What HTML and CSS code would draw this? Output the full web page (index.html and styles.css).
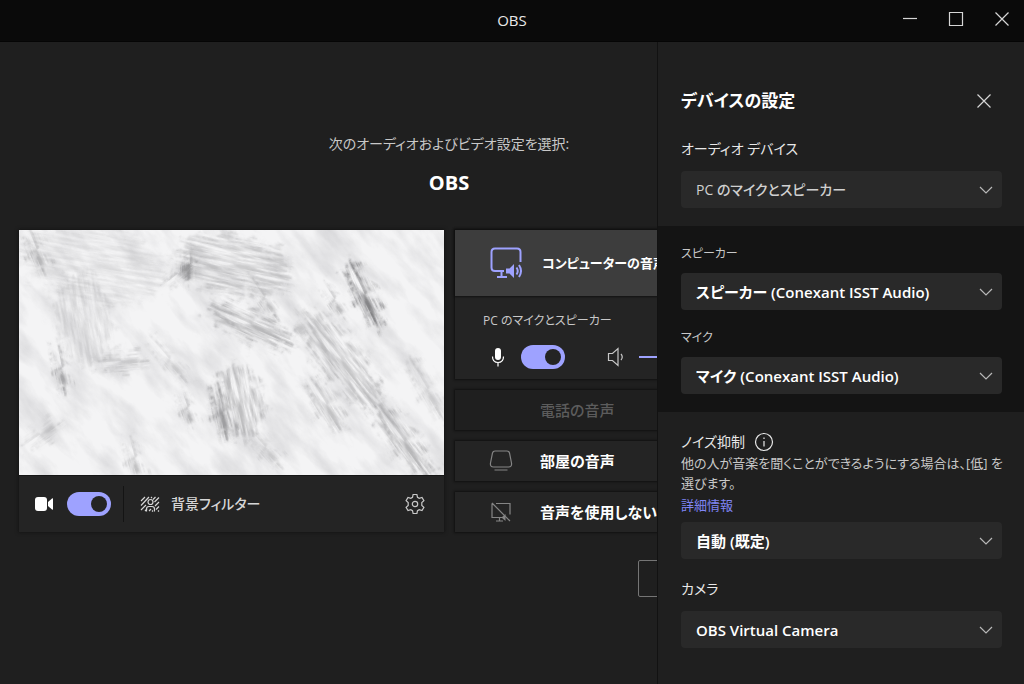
FILE: index.html
```html
<!DOCTYPE html>
<html lang="ja">
<head>
<meta charset="utf-8">
<meta name="viewport" content="width=device-width, initial-scale=1">
<title>OBS</title>
<link rel="stylesheet" href="styles.css">
</head>
<body>
<header class="titlebar">
  <span class="titlebar-name">OBS</span>
  <div class="window-buttons">
    <button class="icon-button" aria-label="最小化"><svg width="16" height="16" viewBox="0 0 16 16"><path d="M1 7.5h14"/></svg></button>
    <button class="icon-button" aria-label="最大化"><svg width="16" height="16" viewBox="0 0 16 16"><path d="M1.500 1.500h13v13h-13z"/></svg></button>
    <button class="icon-button" aria-label="閉じる"><svg width="16" height="16" viewBox="0 0 16 16"><path d="M1.500 1.500l13 13M14.500 1.500l-13 13"/></svg></button>
  </div>
</header>
<div class="workspace">
  <main class="stage">
    <div class="setup">
      <p class="prompt">次のオーディオおよびビデオ設定を選択:</p>
      <h1 class="meeting">OBS</h1>
      <div class="columns">
        <section class="video-card">
          <svg class="preview" viewBox="0 0 425 245" preserveAspectRatio="none" role="img" aria-label="カメラのプレビュー">
            <defs>
              <filter id="grain" x="0" y="0" width="1" height="1" color-interpolation-filters="sRGB">
                <feTurbulence type="fractalNoise" baseFrequency="0.018 0.05" numOctaves="6" seed="8"/>
                <feColorMatrix values="0 0 0 0 .6  0 0 0 0 .6  0 0 0 0 .62  1.600 0 0 0 -.65"/>
              </filter>
              <filter id="streak" x="-.3" y="-.4" width="1.600" height="1.800" color-interpolation-filters="sRGB">
                <feTurbulence type="fractalNoise" baseFrequency="0.035 0.28" numOctaves="5" seed="5" result="n"/>
                <feTurbulence type="fractalNoise" baseFrequency="0.09" numOctaves="4" seed="3" result="m"/>
                <feColorMatrix in="n" values="0 0 0 0 .5  0 0 0 0 .5  0 0 0 0 .51  2.200 0 0 0 -.6" result="lines"/>
                <feGaussianBlur in="SourceGraphic" stdDeviation="3" result="soft"/>
                <feDisplacementMap in="soft" in2="m" scale="28" xChannelSelector="G" yChannelSelector="B" result="rough"/>
                <feComposite in="lines" in2="rough" operator="in"/>
              </filter>
            </defs>
            <rect width="425" height="245" fill="#f4f4f5"/>
            <g transform="rotate(50 212 122)" opacity=".38"><rect x="-60" y="-130" width="550" height="500" filter="url(#grain)"/></g>
            <g>
              <ellipse rx="75" ry="38" transform="translate(75 35) rotate(10)" opacity=".14" filter="url(#streak)"/>
              <ellipse rx="60" ry="30" transform="translate(215 35) rotate(12)" opacity=".34" filter="url(#streak)"/>
              <ellipse rx="18" ry="6" transform="translate(160 44) rotate(-38)" opacity=".6" filter="url(#streak)"/>
              <ellipse rx="16" ry="5" transform="translate(170 35) rotate(88)" opacity=".8" filter="url(#streak)"/>
              <ellipse rx="48" ry="15" transform="translate(232 95) rotate(24)" opacity=".5" filter="url(#streak)"/>
              <ellipse rx="26" ry="5" transform="translate(245 68) rotate(55)" opacity=".5" filter="url(#streak)"/>
              <ellipse rx="38" ry="10" transform="translate(345 65) rotate(65)" opacity=".95" filter="url(#streak)"/>
              <ellipse rx="18" ry="5" transform="translate(315 70) rotate(57)" opacity=".6" filter="url(#streak)"/>
              <ellipse rx="62" ry="20" transform="translate(322 130) rotate(52)" opacity=".4" filter="url(#streak)"/>
              <ellipse rx="30" ry="12" transform="translate(307 175) rotate(58)" opacity=".4" filter="url(#streak)"/>
              <ellipse rx="38" ry="24" transform="translate(220 172) rotate(78)" opacity=".45" filter="url(#streak)"/>
              <ellipse rx="28" ry="9" transform="translate(203 182) rotate(78)" opacity=".7" filter="url(#streak)"/>
              <ellipse rx="16" ry="6" transform="translate(168 178) rotate(70)" opacity=".55" filter="url(#streak)"/>
              <ellipse rx="25" ry="6" transform="translate(42 138) rotate(79)" opacity=".7" filter="url(#streak)"/>
              <ellipse rx="24" ry="11" transform="translate(102 132) rotate(-4)" opacity=".35" filter="url(#streak)"/>
              <ellipse rx="22" ry="8" transform="translate(17 20) rotate(68)" opacity=".5" filter="url(#streak)"/>
              <ellipse rx="48" ry="28" transform="translate(65 90) rotate(80)" opacity=".18" filter="url(#streak)"/>
              <ellipse rx="50" ry="13" transform="translate(385 212) rotate(54)" opacity=".5" filter="url(#streak)"/>
              <ellipse rx="20" ry="7" transform="translate(115 228) rotate(75)" opacity=".45" filter="url(#streak)"/>
              <ellipse rx="24" ry="7" transform="translate(246 218) rotate(48)" opacity=".35" filter="url(#streak)"/>
              <ellipse rx="30" ry="6" transform="translate(150 130) rotate(50)" opacity=".3" filter="url(#streak)"/>
              <ellipse rx="40" ry="8" transform="translate(408 160) rotate(60)" opacity=".3" filter="url(#streak)"/>
              <ellipse rx="20" ry="8" transform="translate(22 205) rotate(-35)" opacity=".3" filter="url(#streak)"/>
            </g>
          </svg>
          <div class="video-bar">
            <svg class="camera" width="20" height="16" viewBox="0 0 20 16"><rect x="1" y="1" width="12" height="14" rx="3"/><path d="M14 6l4-3.500c.6-.5 1-.3 1 .4v10.200c0 .7-.4.900-1 .4L14 10z"/></svg>
            <input class="switch" type="checkbox" role="switch" aria-label="カメラ" checked>
            <span class="divider"></span>
            <button class="filter-button">
              <svg width="20" height="16" viewBox="0 0 20 16"><path d="M1 5l4-4M1 9.500L9 1M1 14l5-5M5 15l2-2M15.500 1L13 3.500M19 1.500L14.500 6M19 6l-4 4M19 10.500L16 13.500M19 14.500l-1 1M12 1l-1 1"/><circle cx="10.500" cy="6" r="2.500"/><path d="M6.500 15.500v-2.500q0-2.500 2.500-2.500h3q2.500 0 2.500 2.500v2.500M9 15l2-2M12 15.500l1-1"/></svg>
              背景フィルター
            </button>
            <button class="icon-button settings" aria-label="設定"><svg width="22" height="22" viewBox="0 0 22 22"><path d="M9.100 1.500h3.800l.6 2.800 1.700 1 2.800-.9 1.900 3.300-2.100 1.900v2.800l2.100 1.900-1.900 3.300-2.800-.9-1.700 1-.6 2.800H9.100l-.6-2.800-1.700-1-2.800.9-1.900-3.300 2.100-1.900V9.600L2.100 7.700 4 4.400l2.800.9 1.700-1z"/><circle cx="11" cy="11" r="2.700"/></svg></button>
          </div>
        </section>
        <section class="audio-list">
          <div class="computer-audio">
            <button class="option selected">
              <svg class="computer" width="34" height="34" viewBox="0 0 34 34"><path d="M15 25H6q-3.500 0-3.500-3.500V6Q2.500 2.500 6 2.500h22q3.500 0 3.500 3.500v10M8 31h10M12.500 25v6"/><path class="solid" d="M17 22.500h3.500L25 18v14l-4.500-4.500H17z"/><path d="M27.500 21.500q2.500 3.500 0 7M30 19q4 6 0 12"/></svg>
              コンピューターの音声
            </button>
            <div class="device-controls">
              <p class="device-name">PC のマイクとスピーカー</p>
              <div class="device-row">
                <svg class="mic" width="16" height="20" viewBox="0 0 16 20"><rect class="solid" x="5" y="1" width="6" height="12" rx="3"/><path d="M2.500 9.500q0 6 5.500 6t5.500-6M8 15.500v4"/></svg>
                <input class="switch" type="checkbox" role="switch" aria-label="マイク" checked>
                <svg class="speaker" width="18" height="20" viewBox="0 0 18 20"><path d="M1.500 6.500h4l5.500-5v17l-5.500-5h-4zM14 7q2.500 3 0 6"/></svg>
                <input class="volume" type="range" value="90" aria-label="音量">
              </div>
            </div>
          </div>
          <button class="option" disabled><span class="option-icon"></span>電話の音声</button>
          <button class="option">
            <svg class="option-icon" width="24" height="24" viewBox="0 0 24 24"><path d="M6 2h12q2 0 2.500 2l2 10q.6 4-3 4h-15q-3.600 0-3-4l2-10q.5-2 2.500-2zM5.500 21h13"/></svg>
            部屋の音声
          </button>
          <button class="option">
            <svg class="option-icon" width="24" height="24" viewBox="0 0 24 24"><path d="M7 3.500h14v11M3 3.500v14h11M7 21h7M10.500 17.500V21M3 3l18 18"/><path class="solid" d="M12.500 17.500l4-3.500v7z"/></svg>
            音声を使用しない
          </button>
          <div class="actions"><button class="action" aria-label="キャンセル"></button></div>
        </section>
      </div>
    </div>
  </main>
  <aside class="panel">
    <section class="group group-device">
      <div class="panel-head">
        <h2 class="panel-title">デバイスの設定</h2>
        <button class="icon-button" aria-label="閉じる"><svg width="16" height="16" viewBox="0 0 16 16"><path d="M1.500 1.500l13 13M14.500 1.500l-13 13"/></svg></button>
      </div>
      <label class="label" for="device">オーディオ デバイス</label>
      <div class="picker quiet"><select id="device"><option>PC のマイクとスピーカー</option></select><svg width="14" height="8" viewBox="0 0 14 8"><path d="M1 1l6 6 6-6"/></svg></div>
    </section>
    <section class="group group-dark">
      <label class="label small" for="speaker">スピーカー</label>
      <div class="picker"><select id="speaker"><option>スピーカー (Conexant ISST Audio)</option></select><svg width="14" height="8" viewBox="0 0 14 8"><path d="M1 1l6 6 6-6"/></svg></div>
      <label class="label small next" for="mic">マイク</label>
      <div class="picker"><select id="mic"><option>マイク (Conexant ISST Audio)</option></select><svg width="14" height="8" viewBox="0 0 14 8"><path d="M1 1l6 6 6-6"/></svg></div>
    </section>
    <section class="group group-noise">
      <div class="noise-head">
        <label class="label" for="noise">ノイズ抑制</label>
        <svg class="info" width="20" height="20" viewBox="0 0 20 20"><circle cx="10" cy="10" r="8.500"/><path d="M10 9v5.500M10 5.500v1.500"/></svg>
      </div>
      <p class="hint">他の人が音楽を聞くことができるようにする場合は、[低] を選びます。</p>
      <a class="more" href="#">詳細情報</a>
      <div class="picker"><select id="noise"><option>自動 (既定)</option></select><svg width="14" height="8" viewBox="0 0 14 8"><path d="M1 1l6 6 6-6"/></svg></div>
      <label class="label next" for="camera">カメラ</label>
      <div class="picker"><select id="camera"><option>OBS Virtual Camera</option></select><svg width="14" height="8" viewBox="0 0 14 8"><path d="M1 1l6 6 6-6"/></svg></div>
    </section>
  </aside>
</div>
</body>
</html>
```
FILE: styles.css
```css
* { box-sizing: border-box; }
body {
  margin: 0;
  min-height: 100vh;
  display: flex;
  flex-direction: column;
  background: #1f1f1f;
  color: #fff;
  font-family: "Open Sans", "Noto Sans CJK JP", sans-serif;
  font-size: 14px;
  line-height: 20px;
  font-feature-settings: "palt";
}
p, h1, h2 { margin: 0; }
button, select, input { font: inherit; font-feature-settings: inherit; color: inherit; margin: 0; }
button { background: none; border: 0; padding: 0; }
svg { display: block; flex: none; fill: none; stroke: currentColor; stroke-width: 1.2; }

.titlebar {
  display: grid;
  grid-template-columns: 1fr auto 1fr;
  align-items: center;
  height: 42px;
  padding-bottom: 2px;
  background: #0a0a0a;
  border-bottom: 1px solid #050505;
}
.titlebar-name { grid-column: 2; font-size: 15px; color: #e8e8e8; }
.window-buttons { display: flex; justify-content: flex-end; gap: 30px; padding: 0 14px 2px 0; color: #d6d6d6; }

.workspace { flex: 1; display: flex; }
.stage { flex: 1; min-width: 0; overflow: hidden; }
.setup { width: 898px; padding: 91px 19px 0; }
.prompt { text-align: center; line-height: 22px; color: #c8c8c8; }
.meeting { margin-top: 14px; text-align: center; font-size: 20px; line-height: 28px; font-weight: 700; }
.columns { display: grid; grid-template-columns: 425px 1fr; gap: 11px; align-items: start; margin-top: 33px; }

.video-card { background: #242424; box-shadow: 0 0 3px 1px #161616; }
.preview { width: 100%; height: 245px; stroke: none; fill: #000; }
.video-bar { display: flex; align-items: center; height: 57px; padding: 0 18px 0 15px; border-top: 1px solid #161616; }
.camera { fill: #fff; stroke: none; }
.switch {
  appearance: none;
  width: 44px;
  height: 24px;
  padding: 4px;
  border-radius: 12px;
  background: #9ea2ff;
  display: flex;
  justify-content: flex-end;
}
.switch::before { content: ""; width: 16px; height: 16px; border-radius: 50%; background: #242424; }
.video-bar .switch { margin-left: 13px; }
.divider { width: 1px; height: 36px; margin: 0 16px 0 12px; background: #141414; }
.filter-button { display: flex; align-items: center; gap: 11px; font-weight: 500; color: #d6d6d6; }
.settings { margin-left: auto; color: #c8c8c8; }

.audio-list { display: flex; flex-direction: column; gap: 11px; }
.computer-audio { background: #242424; box-shadow: 0 0 2px 1px #111; }
.option {
  display: flex;
  align-items: center;
  gap: 27px;
  width: 100%;
  height: 40px;
  padding-left: 34px;
  background: #242424;
  box-shadow: 0 0 2px 1px #111;
  font-size: 15px;
  font-weight: 700;
  text-align: left;
}
.option:disabled { background: #1f1f1f; color: #5c5c5c; font-weight: 500; }
.option.selected { height: 66px; gap: 19px; background: #3d3d3d; font-size: 13px; }
.option-icon { width: 24px; color: #858585; }
.computer { color: #9ea2ff; stroke-width: 2; }
.solid { fill: currentColor; stroke: none; }
.device-controls { padding: 15px 28px 10px; }
.device-name { font-size: 12px; color: #c8c8c8; }
.device-row { display: flex; align-items: center; height: 24px; margin-top: 14px; padding-left: 7px; }
.mic { color: #fff; }
.device-row .switch { margin-left: 15px; }
.speaker { margin-left: 42px; color: #c8c8c8; }
.volume { appearance: none; flex: 1; height: 2px; margin-left: 14px; background: #9ea2ff; }
.volume::-webkit-slider-thumb { appearance: none; width: 12px; height: 12px; border-radius: 50%; background: #9ea2ff; }
.actions { display: flex; padding: 17px 0 0 183px; }
.action { flex: 1; height: 37px; border: 1px solid #757575; border-radius: 2px; }

.panel { width: 367px; border-left: 1px solid #121212; background: #1f1f1f; }
.group { display: flex; flex-direction: column; padding: 19px 22px 16px 23px; }
.group-device { padding-top: 46px; padding-bottom: 18px; }
.group-dark { background: #141414; padding-top: 19px; padding-bottom: 18px; }
.panel-head { display: flex; justify-content: space-between; align-items: center; padding-right: 10px; margin-bottom: 24px; color: #d6d6d6; }
.panel-title { font-size: 17px; line-height: 26px; font-weight: 700; color: #fff; }
.label { line-height: 22px; margin-bottom: 11px; color: #e8e8e8; }
.label.small { font-size: 12px; line-height: 18px; margin-bottom: 10px; color: #c8c8c8; }
.label.next { margin-top: 19px; }
.picker { position: relative; }
.picker select {
  appearance: none;
  display: block;
  width: 100%;
  height: 37px;
  padding: 0 32px 0 15px;
  border: 0;
  border-radius: 4px;
  background: #292929;
  font-size: 15px;
  font-weight: 600;
}
.picker.quiet select { font-size: 14px; font-weight: 500; color: #d0d0d0; }
.picker svg { position: absolute; right: 9px; top: 15px; color: #b8b8b8; pointer-events: none; }
.noise-head { display: flex; align-items: center; gap: 9px; }
.noise-head .label { margin: 0; }
.info { color: #e8e8e8; }
.hint { margin-right: -10px; font-size: 13px; color: #c8c8c8; }
.more { margin: 2px 0 7px; align-self: flex-start; font-size: 13px; color: #7f85f5; text-decoration: none; }
```
